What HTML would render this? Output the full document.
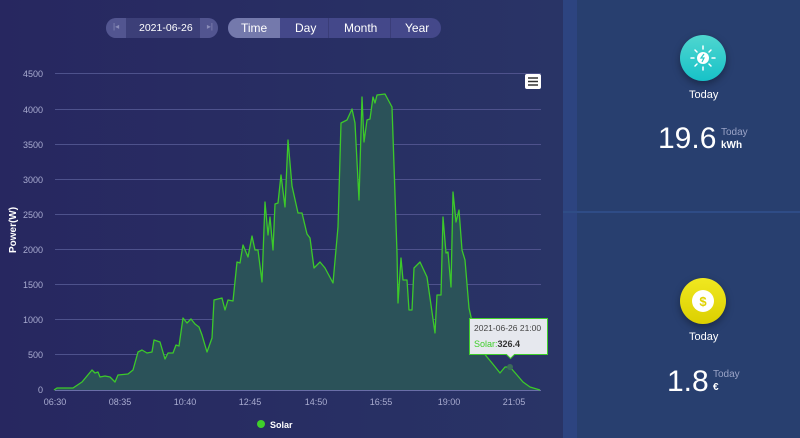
<!DOCTYPE html>
<html><head><meta charset="utf-8"><style>
*{margin:0;padding:0;box-sizing:border-box}
body{width:800px;height:438px;overflow:hidden;font-family:"Liberation Sans",sans-serif;background:#27295e;position:relative}
.main{position:absolute;left:0;top:0;width:563px;height:438px;background:linear-gradient(90deg,#272760,#293466)}
.strip{position:absolute;left:563px;top:0;width:14px;height:438px;background:#2d4480}
.panel{position:absolute;left:577px;width:223px;background:#283f6f}
.t{position:absolute;color:#fff;white-space:nowrap}
.circ{position:absolute;width:46px;height:46px;border-radius:50%;box-shadow:0 3px 8px rgba(0,0,0,.35)}
</style></head><body>
<div class="main"></div>
<div class="strip"></div>
<div class="panel" style="top:0;height:211px"></div>
<div class="panel" style="top:213px;height:225px"></div>
<div style="position:absolute;left:563px;top:211px;width:237px;height:2px;background:#2f4c86"></div>

<div style="position:absolute;left:106px;top:18px;width:112px;height:20px;border-radius:10px;background:#3c3f78;overflow:hidden">
<div style="position:absolute;left:0;top:0;width:20px;height:20px;background:#525590"></div>
<div style="position:absolute;right:0;top:0;width:18px;height:20px;background:#525590"></div>
<div class="t" style="left:7px;top:4px;font-size:8px;color:#8a8cb8">|◂</div>
<div class="t" style="right:5px;top:4px;font-size:8px;color:#8a8cb8">▸|</div>
<div class="t" style="left:33px;top:4px;font-size:10.5px">2021-06-26</div>
</div>
<div style="position:absolute;left:228px;top:18px;width:213px;height:20px;border-radius:10px;background:#44488a;overflow:hidden">
<div style="position:absolute;left:0;top:0;width:52px;height:20px;background:#7479ac"></div>
<div style="position:absolute;left:100px;top:0;width:1px;height:20px;background:#3a3d78"></div>
<div style="position:absolute;left:162px;top:0;width:1px;height:20px;background:#3a3d78"></div>
<div class="t" style="left:13px;top:3px;font-size:12px">Time</div>
<div class="t" style="left:67px;top:3px;font-size:12px">Day</div>
<div class="t" style="left:116px;top:3px;font-size:12px">Month</div>
<div class="t" style="left:177px;top:3px;font-size:12px">Year</div>
</div>

<svg width="563" height="438" style="position:absolute;left:0;top:0" font-family="Liberation Sans,sans-serif">
<g stroke="#4e528c" stroke-width="1">
<line x1="55" x2="541" y1="73.5" y2="73.5"/><line x1="55" x2="541" y1="109.5" y2="109.5"/>
<line x1="55" x2="541" y1="144.5" y2="144.5"/><line x1="55" x2="541" y1="179.5" y2="179.5"/>
<line x1="55" x2="541" y1="214.5" y2="214.5"/><line x1="55" x2="541" y1="249.5" y2="249.5"/>
<line x1="55" x2="541" y1="284.5" y2="284.5"/><line x1="55" x2="541" y1="319.5" y2="319.5"/>
<line x1="55" x2="541" y1="354.5" y2="354.5"/><line x1="55" x2="541" y1="390.5" y2="390.5" stroke="#6a6ea8"/>
</g>
<g fill="#a9acd0" font-size="9" text-anchor="end">
<text x="43" y="77">4500</text><text x="43" y="113">4000</text><text x="43" y="148">3500</text>
<text x="43" y="183">3000</text><text x="43" y="218">2500</text><text x="43" y="253">2000</text>
<text x="43" y="288">1500</text><text x="43" y="323">1000</text><text x="43" y="358">500</text><text x="43" y="393">0</text>
</g>
<g fill="#a9acd0" font-size="9" text-anchor="middle">
<text x="55" y="405">06:30</text><text x="120" y="405">08:35</text><text x="185" y="405">10:40</text>
<text x="250" y="405">12:45</text><text x="316" y="405">14:50</text><text x="381" y="405">16:55</text>
<text x="449" y="405">19:00</text><text x="514" y="405">21:05</text>
</g>
<text transform="translate(16,230) rotate(-90)" fill="#fff" font-size="10" font-weight="bold" text-anchor="middle">Power(W)</text>
<polygon fill="#2b5259" points="54,390 57,388 73,388 82,382 92,370 95,373 98,372 100,377 105,376 110,377 115,382 118,375 128,374 133,370 138,352 142,350 147,353 152,352 154,340 160,342 165,359 168,353 173,353 176,345 179,346 183,318 187,323 191,319 195,324 199,327 202,335 207,352 212,338 214,300 222,298 225,310 228,300 233,301 237,262 240,263 243,245 248,257 252,236 255,250 258,250 262,282 265,202 268,235 270,217 273,250 275,204 278,203 281,175 285,207 288,140 292,186 298,213 302,213 307,234 310,238 314,268 320,262 325,268 333,283 338,227 341,123 347,120 352,109 355,123 359,200 362,97 364,142 367,120 370,119 373,97 375,103 377,95 385,94 392,107 397,253 398,303 401,258 403,280 407,280 409,310 412,310 414,268 420,262 427,277 435,333 437,295 441,295 443,217 446,253 448,252 451,287 453,192 456,222 459,210 462,250 465,260 469,308 475,335 480,348 487,357 492,363 500,373 505,367 510,367 517,375 523,382 530,387 540,390"/>
<polyline fill="none" stroke="#3cc92a" stroke-width="1.3" stroke-linejoin="round" points="54,390 57,388 73,388 82,382 92,370 95,373 98,372 100,377 105,376 110,377 115,382 118,375 128,374 133,370 138,352 142,350 147,353 152,352 154,340 160,342 165,359 168,353 173,353 176,345 179,346 183,318 187,323 191,319 195,324 199,327 202,335 207,352 212,338 214,300 222,298 225,310 228,300 233,301 237,262 240,263 243,245 248,257 252,236 255,250 258,250 262,282 265,202 268,235 270,217 273,250 275,204 278,203 281,175 285,207 288,140 292,186 298,213 302,213 307,234 310,238 314,268 320,262 325,268 333,283 338,227 341,123 347,120 352,109 355,123 359,200 362,97 364,142 367,120 370,119 373,97 375,103 377,95 385,94 392,107 397,253 398,303 401,258 403,280 407,280 409,310 412,310 414,268 420,262 427,277 435,333 437,295 441,295 443,217 446,253 448,252 451,287 453,192 456,222 459,210 462,250 465,260 469,308 475,335 480,348 487,357 492,363 500,373 505,367 510,367 517,375 523,382 530,387 540,390"/>
<circle cx="510" cy="367" r="3" fill="#3a6a5a"/>
<rect x="525" y="74" width="16" height="15" rx="2" fill="#fff"/>
<g stroke="#333" stroke-width="1.5"><line x1="528" x2="538" y1="78" y2="78"/><line x1="528" x2="538" y1="81.5" y2="81.5"/><line x1="528" x2="538" y1="85" y2="85"/></g>
<path d="M469.5 318.5h78v36h-33l-4 4-4-4h-37z" fill="#e6e8ee" stroke="#3fcf2a"/>
<text x="474" y="331" font-size="8.5" fill="#444">2021-06-26 21:00</text>
<text x="474" y="347" font-size="9" fill="#3fcf2a">Solar:<tspan fill="#333" font-weight="bold">326.4</tspan></text>
<circle cx="261" cy="424" r="4" fill="#3fcf2a"/>
<text x="270" y="428" font-size="9" font-weight="bold" fill="#fff">Solar</text>
</svg>

<div class="circ" style="left:680px;top:35px;background:linear-gradient(#4fd6cf,#17c2c8)">
<svg width="46" height="46" viewBox="0 0 46 46"><circle cx="23" cy="23" r="6" fill="#fff"/><path d="M24 19l-3 4h3l-2 4" stroke="#2ac9c8" stroke-width="1.2" fill="none"/><g stroke="#fff" stroke-width="1.5" stroke-linecap="round"><line x1="23" y1="11" x2="23" y2="14"/><line x1="23" y1="32" x2="23" y2="35"/><line x1="11" y1="23" x2="14" y2="23"/><line x1="32" y1="23" x2="35" y2="23"/><line x1="15" y1="15" x2="17" y2="17"/><line x1="29" y1="29" x2="31" y2="31"/><line x1="31" y1="15" x2="29" y2="17"/><line x1="15" y1="31" x2="17" y2="29"/></g></svg>
</div>
<div class="t" style="left:689px;top:89px;font-size:11px">Today</div>
<div class="t" style="left:658px;top:122px;font-size:30px">19.6</div>
<div class="t" style="left:721px;top:127px;font-size:10px;color:#9aa3c6">Today</div>
<div class="t" style="left:721px;top:140px;font-size:10px;font-weight:bold">kWh</div>

<div class="circ" style="left:680px;top:278px;background:linear-gradient(#f0e820,#dcd000)">
<svg width="46" height="46" viewBox="0 0 46 46"><circle cx="23" cy="23" r="11" fill="#fff"/><text x="23" y="28" font-size="13" font-weight="bold" fill="#e0d200" text-anchor="middle" font-family="Liberation Sans">$</text></svg>
</div>
<div class="t" style="left:689px;top:331px;font-size:11px">Today</div>
<div class="t" style="left:667px;top:365px;font-size:30px">1.8</div>
<div class="t" style="left:713px;top:369px;font-size:10px;color:#9aa3c6">Today</div>
<div class="t" style="left:713px;top:382px;font-size:10px;font-weight:bold">€</div>
</body></html>
